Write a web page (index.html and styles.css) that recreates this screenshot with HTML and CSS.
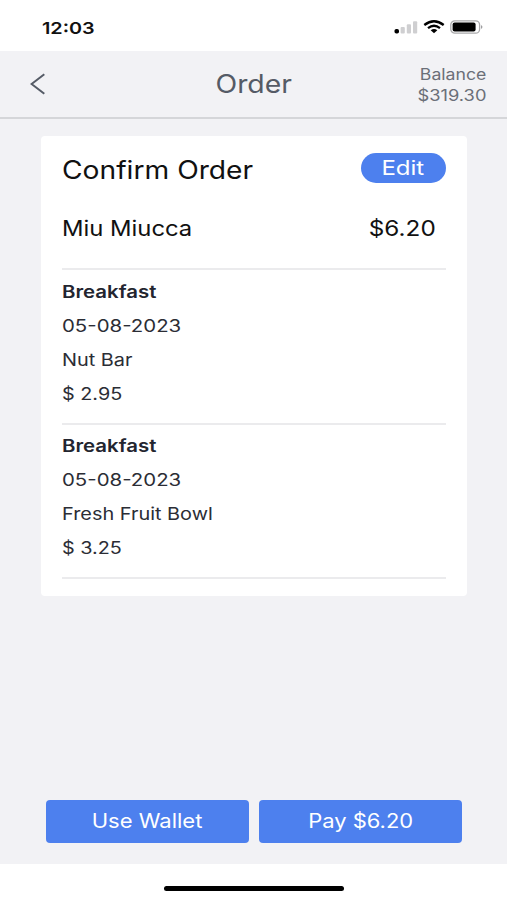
FILE: index.html
```html
<!DOCTYPE html>
<html lang="en">
<head>
<meta charset="utf-8">
<title>Order</title>
<link rel="stylesheet" href="styles.css">
</head>
<body>
<div class="screen">
  <div class="status">
    <span class="time wide">12:03</span>
    <div class="status-icons">
      <svg width="24" height="14" viewBox="0 0 24 14"><rect x="0.5" y="9" width="4.5" height="4.6" rx="1.8" fill="#000"/><g fill="#cfcfd1"><rect x="6.6" y="7" width="4.2" height="6.5" rx="1"/><rect x="12.8" y="4.2" width="4.2" height="9.3" rx="1"/><rect x="19" y="1.3" width="4.2" height="12.2" rx="1"/></g></svg>
      <svg width="22" height="14" viewBox="0 0 22 14"><g fill="none" stroke="#000" stroke-width="2.3"><path d="M1.3 5Q11-2.6 20.7 5"/><path d="M5 8.2Q11 3.4 17 8.2"/></g><path d="M7.7 10.3Q11 7.9 14.3 10.3L11 13.3Z"/></svg>
      <svg width="34" height="14" viewBox="0 0 34 14"><rect x=".8" y=".8" width="28.8" height="12.4" rx="4" fill="#fff" stroke="#a9a9ab" stroke-width="1.3"/><rect x="2.6" y="2.6" width="23" height="8.8" rx="2"/><path d="M31.2 5Q33.6 7 31.2 9Z" fill="#88888b"/></svg>
    </div>
  </div>
  <header class="header">
    <svg class="back" width="16" height="22" viewBox="0 0 16 22"><path d="M14.3 1.2L1.6 11L14.3 20.8" fill="none" stroke="#555b66" stroke-width="2"/></svg>
    <h1 class="title wide">Order</h1>
    <div class="balance"><span class="wide bal-label">Balance</span><span class="wide bal-value">$319.30</span></div>
  </header>
  <main class="main">
    <section class="card">
      <div class="card-head"><h2 class="wide confirm">Confirm Order</h2><button class="edit"><span class="wide edit-text">Edit</span></button></div>
      <div class="person"><span class="wide name">Miu Miucca</span><span class="wide total">$6.20</span></div>
      <div class="item"><b class="wide meal">Breakfast</b><span class="wide date">05-08-2023</span><span class="wide food">Nut Bar</span><span class="wide price">$ 2.95</span></div>
      <div class="item"><b class="wide meal">Breakfast</b><span class="wide date">05-08-2023</span><span class="wide food">Fresh Fruit Bowl</span><span class="wide price">$ 3.25</span></div>
    </section>
    <div class="actions"><button class="action"><span class="wide wallet">Use Wallet</span></button><button class="action"><span class="wide pay">Pay $6.20</span></button></div>
  </main>
  <footer class="footer"><div class="home"></div></footer>
</div>
</body>
</html>
```
FILE: styles.css
```css
* { box-sizing: border-box; }
body { margin: 0; font-family: Inter, "Liberation Sans", sans-serif; background: #f2f2f5; }
h1, h2 { margin: 0; font-weight: 400; }
button { border: 0; padding: 0; font: inherit; color: #fff; background: #4d80ee; }
.wide { display: block; width: max-content; white-space: nowrap; transform: scaleX(var(--stretch, 1.2)); transform-origin: left center; }
.screen { width: 507px; height: 900px; display: flex; flex-direction: column; }
.status { height: 51px; background: #fff; display: flex; justify-content: space-between; align-items: center; padding: 3px 23px 0 42px; }
.time { font-size: 16.5px; font-weight: 600; color: #111; padding-top: 1px; }
.status-icons { display: flex; gap: 5px; }
.status-icons svg:first-child { margin-right: 1px; }
.status-icons svg:nth-child(2) { margin-left: -1px; }
.header { height: 68px; border-bottom: 2px solid #d5d6d9; display: grid; grid-template-columns: 1fr auto 1fr; align-items: center; padding: 0 21px 0 30px; color: #555b66; }
.title { --stretch: 1.135; font-size: 25px; transform-origin: center; margin: 0 8px 0 0; }
.balance { display: flex; flex-direction: column; align-items: flex-end; font-size: 15.5px; line-height: 21px; color: #6b6f78; padding-top: 1px; }
.balance .wide { transform-origin: right center; }
.bal-label { --stretch: 1.14; }
.bal-value { --stretch: 1.18; }
.main { flex: 1; display: flex; flex-direction: column; padding: 17px 40px 21.5px 41px; }
.card { height: 459.5px; border-radius: 4px; background: #fff; padding: 17px 21px 0; color: #111; }
.card-head { display: flex; justify-content: space-between; height: 34px; }
.confirm { --stretch: 1.128; font-size: 25px; line-height: 34px; }
.edit { width: 85px; height: 30px; border-radius: 15px; display: flex; align-items: center; justify-content: center; font-size: 20px; padding-right: 1px; }
.edit-text, .wallet, .pay { transform-origin: center; }
.person { display: flex; justify-content: space-between; font-size: 21.3px; line-height: 30px; padding: 26px 10px 26px 0; height: 83px; border-bottom: 2px solid #ebebed; }
.name { --stretch: 1.118; }
.total { --stretch: 1.14; transform-origin: right center; }
.item { font-size: 17px; line-height: 34px; color: #2b2d35; padding: 5px 0 11.5px; border-bottom: 2px solid #ebebed; }
.item + .item { padding: 4.5px 0 12px; }
.meal { font-weight: 600; color: #23252f; }
.food { --stretch: 1.17; }
.price { --stretch: 1.165; }
.actions { margin-top: auto; display: flex; gap: 10px; padding: 0 5px; }
.action { flex: 1; height: 43px; border-radius: 4px; display: flex; align-items: center; justify-content: center; font-size: 19.5px; padding-bottom: 1px; }
.wallet { --stretch: 1.13; }
.pay { --stretch: 1.125; }
.footer { height: 36px; background: #fff; display: flex; justify-content: center; padding-top: 22px; }
.home { width: 180px; height: 5px; border-radius: 3px; background: #000; }
```
